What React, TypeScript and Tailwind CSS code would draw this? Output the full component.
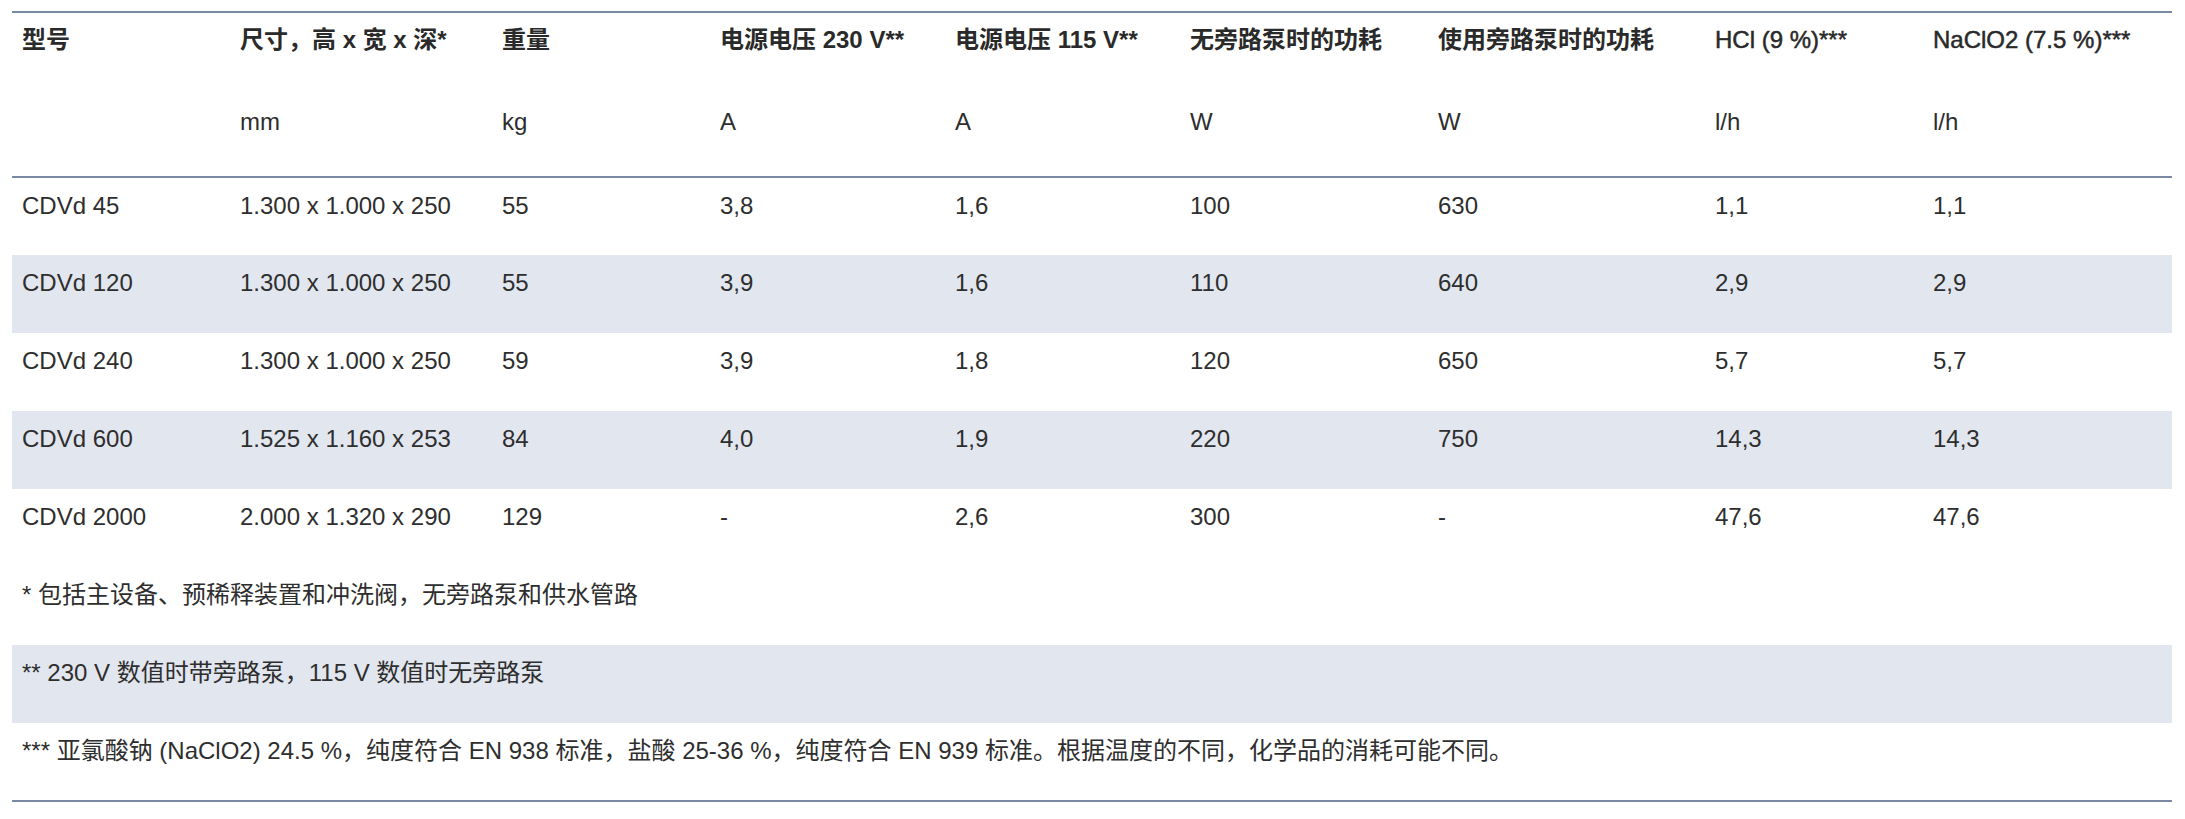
const columns = [
  { title: '型号', unit: '', width: 'w-[218px]', bold: true },
  { title: '尺寸，高 x 宽 x 深*', unit: 'mm', width: 'w-[262px]', bold: true },
  { title: '重量', unit: 'kg', width: 'w-[218px]', bold: true },
  { title: '电源电压 230 V**', unit: 'A', width: 'w-[235px]', bold: true },
  { title: '电源电压 115 V**', unit: 'A', width: 'w-[235px]', bold: true },
  { title: '无旁路泵时的功耗', unit: 'W', width: 'w-[248px]', bold: true },
  { title: '使用旁路泵时的功耗', unit: 'W', width: 'w-[277px]', bold: true },
  { title: 'HCl (9 %)***', unit: 'l/h', width: 'w-[218px]', bold: false },
  { title: 'NaClO2 (7.5 %)***', unit: 'l/h', width: 'w-[249px]', bold: false },
];

const rows = [
  ['CDVd 45', '1.300 x 1.000 x 250', '55', '3,8', '1,6', '100', '630', '1,1', '1,1'],
  ['CDVd 120', '1.300 x 1.000 x 250', '55', '3,9', '1,6', '110', '640', '2,9', '2,9'],
  ['CDVd 240', '1.300 x 1.000 x 250', '59', '3,9', '1,8', '120', '650', '5,7', '5,7'],
  ['CDVd 600', '1.525 x 1.160 x 253', '84', '4,0', '1,9', '220', '750', '14,3', '14,3'],
  ['CDVd 2000', '2.000 x 1.320 x 290', '129', '-', '2,6', '300', '-', '47,6', '47,6'],
];

const notes = [
  '* 包括主设备、预稀释装置和冲洗阀，无旁路泵和供水管路',
  '** 230 V 数值时带旁路泵，115 V 数值时无旁路泵',
  '*** 亚氯酸钠 (NaClO2) 24.5 %，纯度符合 EN 938 标准，盐酸 25-36 %，纯度符合 EN 939 标准。根据温度的不同，化学品的消耗可能不同。',
];

const App = () => {
  return (
    <div className="min-h-screen bg-white pt-[11px] px-[12px] font-['Liberation_Sans','Noto_Sans_CJK_SC',sans-serif] text-[#2e2e2e]">
      <table className="w-[2160px] table-fixed border-collapse text-[24px] leading-[28px]">
        <colgroup>
          {columns.map((c, i) => (
            <col key={i} className={c.width} />
          ))}
        </colgroup>
        <thead>
          <tr className="h-[82px] border-t-2 border-[#7a8aa3]">
            {columns.map((c, i) => (
              <th
                key={i}
                className={
                  c.bold
                    ? 'text-left align-top pt-[13px] pl-[10px] font-bold text-[#2a2a2a] whitespace-nowrap'
                    : 'text-left align-top pt-[13px] pl-[10px] font-normal text-[#2a2a2a] whitespace-nowrap [-webkit-text-stroke:0.5px_#2a2a2a]'
                }
              >
                {c.title}
              </th>
            ))}
          </tr>
          <tr className="h-[83px]">
            {columns.map((c, i) => (
              <td key={i} className="align-top pt-[14px] pl-[10px]">
                {c.unit}
              </td>
            ))}
          </tr>
        </thead>
        <tbody>
          {rows.map((r, i) => (
            <tr
              key={i}
              className={
                (i === 0 ? 'border-t-2 border-[#7a8aa3] ' : '') +
                (i % 2 === 1 ? 'bg-[#e2e6ee] h-[78px]' : 'h-[78px]')
              }
            >
              {r.map((v, j) => (
                <td key={j} className="align-top pt-[14px] pl-[10px] whitespace-nowrap">
                  {v}
                </td>
              ))}
            </tr>
          ))}
          {notes.map((n, i) => (
            <tr
              key={i}
              className={
                (i === notes.length - 1 ? 'border-b-2 border-[#7a8aa3] ' : '') +
                (i === 1 ? 'bg-[#e2e6ee] h-[78px]' : 'h-[78px]')
              }
            >
              <td colSpan={9} className="align-top pt-[14px] pl-[10px] whitespace-nowrap">
                {n}
              </td>
            </tr>
          ))}
        </tbody>
      </table>
    </div>
  );
};

export default App;
